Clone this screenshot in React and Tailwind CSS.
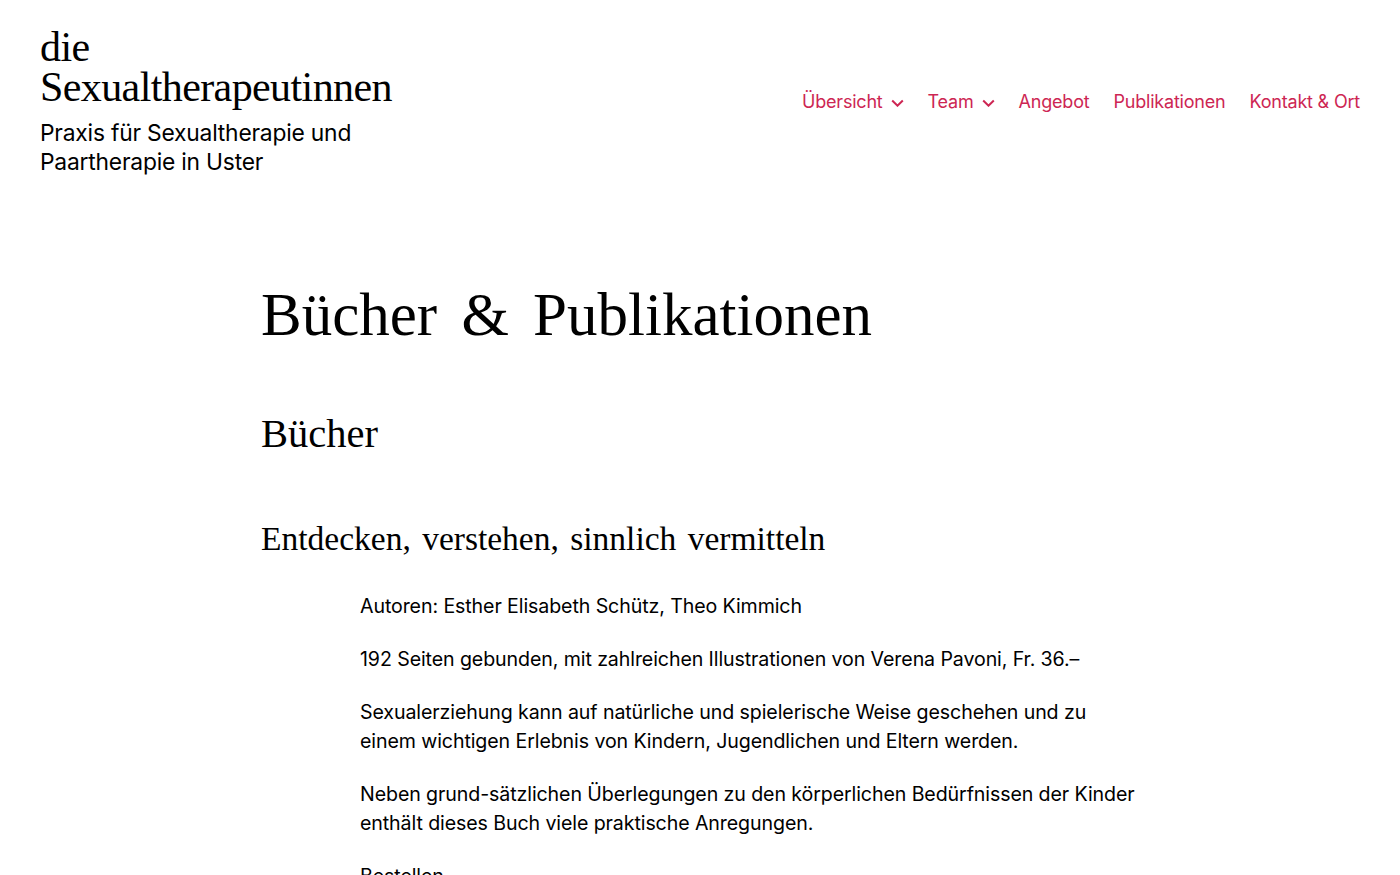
import React from "react";

const Chevron = () => (
  <svg width="13" height="8" viewBox="0 0 13 8" className="ml-[8px] mt-[2px]" fill="none">
    <path d="M1.2 1.5l5.3 5.2 5.3-5.2" stroke="#cd2653" strokeWidth="2" />
  </svg>
);

export default function App() {
  const inter = { fontFamily: "Inter, 'Noto Sans', sans-serif" };
  const serif = { fontFamily: "'Liberation Serif', 'Times New Roman', serif" };
  return (
    <div className="min-h-[875px] bg-white text-black overflow-hidden" style={inter}>
      <header className="flex justify-between items-start px-[40px] pt-[27px]">
        <div>
          <div className="text-[42px] leading-[40px] tracking-[-0.6px]" style={serif}>
            die
            <br />
            Sexualtherapeutinnen
          </div>
          <div className="text-[22.8px] leading-[29px] mt-[11px] w-[340px] tracking-[-0.2px]">
            Praxis für Sexualtherapie und Paartherapie in Uster
          </div>
        </div>
        <nav className="flex items-center gap-[24px] mt-[61px] text-[18px] text-[#cd2653] tracking-[-0.2px]">
          <span className="flex items-center">Übersicht<Chevron /></span>
          <span className="flex items-center">Team<Chevron /></span>
          <span>Angebot</span>
          <span>Publikationen</span>
          <span>Kontakt &amp; Ort</span>
        </nav>
      </header>
      <main className="pl-[261px] pt-[99px]">
        <h1 className="text-[61px] leading-[80px] [word-spacing:9px]" style={serif}>
          Bücher &amp; Publikationen
        </h1>
        <h2 className="text-[40.5px] leading-[50px] mt-[54px]" style={serif}>
          Bücher
        </h2>
        <h3 className="text-[33.5px] leading-[44px] mt-[58px] [word-spacing:3px]" style={serif}>
          Entdecken, verstehen, sinnlich vermitteln
        </h3>
        <div className="ml-[99px] w-[778px] mt-[31px] text-[19.6px] leading-[29px] tracking-[-0.1px]">
          <p>Autoren: Esther Elisabeth Schütz, Theo Kimmich</p>
          <p className="mt-[24px]">192 Seiten gebunden, mit zahlreichen Illustrationen von Verena Pavoni, Fr. 36.–</p>
          <p className="mt-[24px]">
            Sexualerziehung kann auf natürliche und spielerische Weise geschehen und zu einem wichtigen Erlebnis von Kindern, Jugendlichen und Eltern werden.
          </p>
          <p className="mt-[24px]">
            Neben grund-sätzlichen Überlegungen zu den körperlichen Bedürfnissen der Kinder enthält dieses Buch viele praktische Anregungen.
          </p>
          <p className="mt-[24px]">Bestellen</p>
        </div>
      </main>
    </div>
  );
}
